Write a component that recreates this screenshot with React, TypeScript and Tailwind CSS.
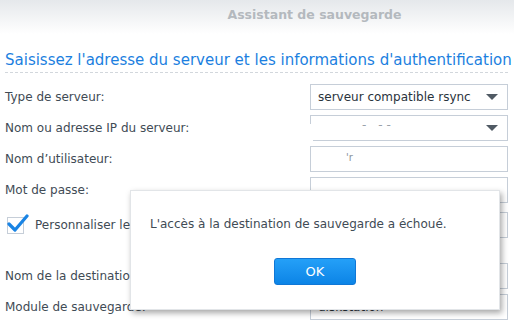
import React from 'react';

const font = { fontFamily: '"DejaVu Sans", Verdana, sans-serif' };

function Caret() {
    return (
        <svg width="12" height="7" viewBox="0 0 12 7" className="shrink-0">
            <path d="M0 0 H12 L6 6 Z" fill="#505a64" />
        </svg>
    );
}

function Field({ children, caret = false, className = '' }: { children?: React.ReactNode; caret?: boolean; className?: string }) {
    return (
        <div className={`relative h-[26px] w-[198px] border border-[#c6ced8] bg-white flex items-center pl-[7px] pr-[9px] ${className}`}>
            <div className="flex-1 text-[12px] text-[#2a333c] whitespace-nowrap">{children}</div>
            {caret && <Caret />}
        </div>
    );
}

function Row({ label, children }: { label?: React.ReactNode; children?: React.ReactNode }) {
    return (
        <div className="flex items-center justify-between h-[26px]">
            <div className="text-[12px] text-[#414b55] whitespace-nowrap">{label}</div>
            {children}
        </div>
    );
}

export default function App() {
    return (
        <div className="relative w-[514px] h-[330px] overflow-hidden bg-white" style={font}>
            {/* en-tête */}
            <div className="h-[34px] bg-gradient-to-b from-[#e5e8eb] to-white flex items-center justify-center pl-[115px] pb-[4px]">
                <span className="text-[12.5px] font-bold text-[#b4b9be]">Assistant de sauvegarde</span>
            </div>

            <div className="pl-[5px] pr-[6px]">
                <div className="pt-[16px] pb-[2px] leading-[20px] border-b border-dashed border-[#d2d7dc] text-[15px] text-[#1c7fe0] whitespace-nowrap">
                    Saisissez l'adresse du serveur et les informations d'authentification
                </div>

                <div className="pt-[11px] flex flex-col gap-[5px]">
                    <Row label="Type de serveur:">
                        <Field caret>serveur compatible rsync</Field>
                    </Row>
                    <Row label="Nom ou adresse IP du serveur:">
                        <Field caret>
                            <span className="relative top-[-3px] pl-[44px] text-[#9aa2aa] tracking-[4px]">- --</span>
                            <span className="absolute left-[-1px] top-[8px] w-[3px] h-[18px] bg-white" />
                        </Field>
                    </Row>
                    <Row label="Nom d’utilisateur:">
                        <Field>
                            <span className="relative top-[-2px] pl-[28px] text-[10px] text-[#8a929a]">'r</span>
                        </Field>
                    </Row>
                    <Row label="Mot de passe:">
                        <Field />
                    </Row>
                    <div className="mt-[4px]">
                        <Row
                            label={
                                <div className="flex items-center gap-[11px] pl-[2px]">
                                    <div className="relative w-[17px] h-[17px] border border-[#c6ced8] bg-white">
                                        <svg width="22" height="20" viewBox="0 0 22 20" className="absolute left-[-1px] top-[-5px]">
                                            <path d="M2 11 L8 17 L20 3" fill="none" stroke="#1a84e4" strokeWidth="3.2" strokeLinecap="round" strokeLinejoin="round" />
                                        </svg>
                                    </div>
                                    <span>Personnaliser le port</span>
                                </div>
                            }
                        >
                            <Field />
                        </Row>
                    </div>
                    <div className="mt-[20px]">
                        <Row label="Nom de la destination :">
                            <Field />
                        </Row>
                    </div>
                    <Row label="Module de sauvegarde:">
                        <Field caret>diskstation</Field>
                    </Row>
                </div>
            </div>

            {/* boîte de dialogue */}
            <div className="absolute left-[130px] top-[190px] w-[370px] h-[120px] bg-white border border-[#e2e5e8] shadow-[2px_3px_6px_rgba(0,0,0,0.35)] flex flex-col items-center">
                <div className="self-start pl-[19px] pt-[24px] text-[12px] text-[#414b55] whitespace-nowrap">
                    L'accès à la destination de sauvegarde a échoué.
                </div>
                <button className="mt-[25px] w-[82px] h-[27px] rounded-[3px] border border-[#1077d6] bg-gradient-to-b from-[#24a0f8] to-[#0b84e6] text-white text-[13px]">
                    OK
                </button>
            </div>
        </div>
    );
}
